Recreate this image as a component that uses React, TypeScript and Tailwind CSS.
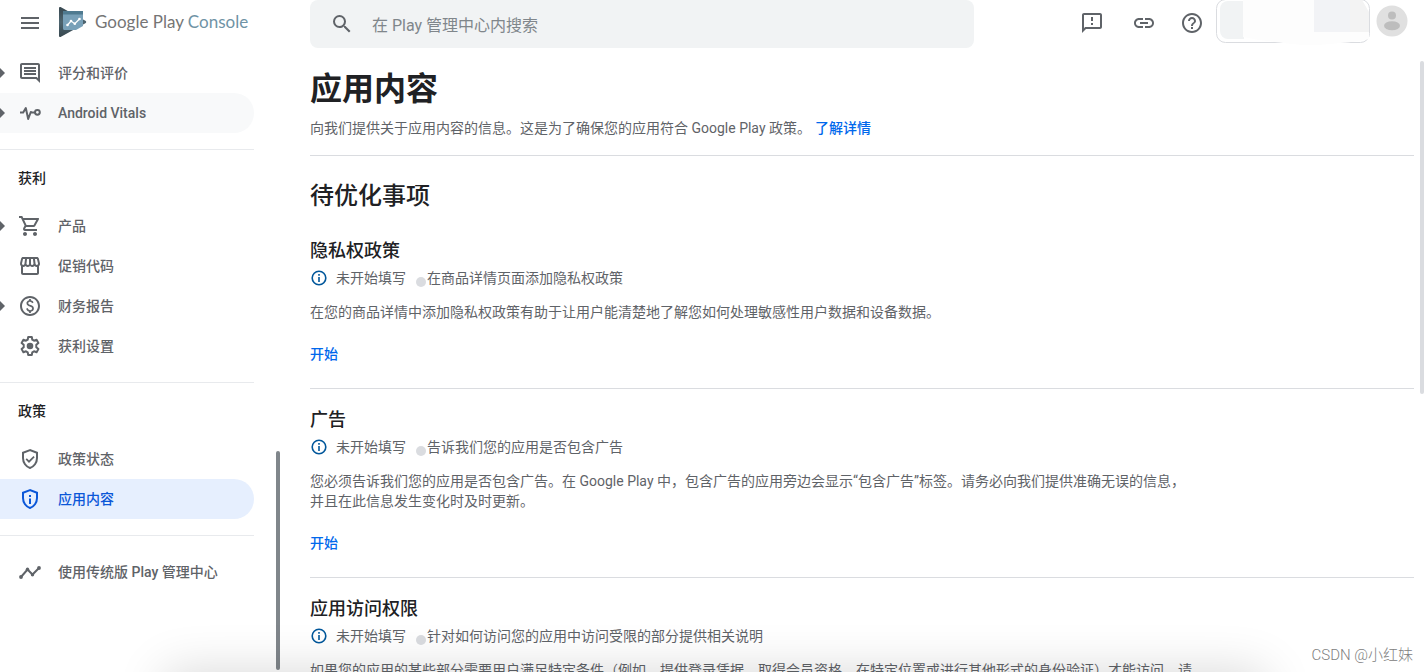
import type { ReactNode } from 'react'
import {
  MdHelpOutline,
  MdLink,
  MdMenu,
  MdOutlineComment,
  MdOutlineFeedback,
  MdOutlinePaid,
  MdOutlineShoppingCart,
  MdOutlineStorefront,
  MdSearch,
} from 'react-icons/md'

type NavItem = {
  label: string
  icon: ReactNode
  expandable?: boolean
  state?: 'hover' | 'active'
}

type Task = {
  title: string
  hint: string
  description: string
}

const SHIELD = 'M12 3.1 5 5.7v5.4c0 4.5 3 8.7 7 9.9 4-1.2 7-5.4 7-9.9V5.7z'

function VitalsIcon() {
  return (
    <svg width="24" height="24" viewBox="0 0 24 24" fill="none" stroke="currentColor" strokeWidth="2" strokeLinejoin="round">
      <path d="M2 11.5h3.2L7.8 7l2.4 11 2.6-7 1.2.6h3" />
      <circle cx="19.4" cy="11.3" r="2.4" />
    </svg>
  )
}

function GearIcon() {
  return (
    <svg width="24" height="24" viewBox="0 0 24 24" fill="none" stroke="currentColor" strokeWidth="2" strokeLinejoin="round">
      <path d="M10.2 3h3.6l.5 2.7 1.7 1 2.6-.9 1.8 3.1-2.1 1.8v2.6l2.1 1.8-1.8 3.1-2.6-.9-1.7 1-.5 2.7h-3.6l-.5-2.7-1.7-1-2.6.9-1.8-3.1 2.1-1.8v-2.6L3.6 8.9l1.8-3.1 2.6.9 1.7-1z" />
      <circle cx="12" cy="12" r="3.3" fill="currentColor" stroke="none" />
    </svg>
  )
}

function ShieldCheckIcon() {
  return (
    <svg width="24" height="24" viewBox="0 0 24 24" fill="none" stroke="currentColor" strokeWidth="2">
      <path d={SHIELD} />
      <path d="m8.2 11.9 2.8 2.8 5.1-5.1" strokeWidth="1.7" />
    </svg>
  )
}

function ShieldInfoIcon() {
  return (
    <svg width="24" height="24" viewBox="0 0 24 24" fill="none" stroke="currentColor" strokeWidth="2">
      <path d={SHIELD} />
      <path d="M12 8v2M12 11.5V17" />
    </svg>
  )
}

function TrendIcon() {
  return (
    <svg width="24" height="24" viewBox="0 0 24 24" fill="currentColor">
      <path d="m3 17 6.5-7.5 5 5L21 8" fill="none" stroke="currentColor" strokeWidth="2" />
      <circle cx="3" cy="17" r="1.9" />
      <circle cx="9.5" cy="9.3" r="1.7" />
      <circle cx="14.5" cy="14.8" r="1.7" />
      <circle cx="21" cy="8" r="1.9" />
    </svg>
  )
}

function InfoIcon() {
  return (
    <svg className="shrink-0" width="18" height="18" viewBox="0 0 18 18" fill="none" stroke="#01579b" strokeWidth="1.6">
      <circle cx="9" cy="9" r="6.8" />
      <path d="M9 5v1.7M9 8v5" />
    </svg>
  )
}

function PlayLogo() {
  return (
    <svg width="28" height="32" viewBox="0 0 28 32">
      <defs>
        <linearGradient id="logo-back" x1="0" y1="0" x2="0" y2="1">
          <stop offset="0" stopColor="#37474f" />
          <stop offset="0.5" stopColor="#4d646f" />
          <stop offset="1" stopColor="#37474f" />
        </linearGradient>
      </defs>
      <path d="M0 2.2C0 1 1 .6 2 1.2l24.4 13.6c1.1.7 1.1 1.9 0 2.5L2 30.8c-1 .5-2 .1-2-1z" fill="url(#logo-back)" />
      <path d="M4 5h20v15l-7 4H5.5C4.6 24 4 23.4 4 22.5z" fill="#78a0b8" />
      <path d="M4 5h20v3.5H4z" fill="#4f7a90" />
      <path d="m8.5 19 3.5-4 3.8 2.7L20.5 13" fill="none" stroke="#fff" strokeWidth="1.3" />
      <g fill="#fff">
        <circle cx="8.5" cy="19" r="1.3" />
        <circle cx="12" cy="15" r="1.3" />
        <circle cx="15.8" cy="17.7" r="1.3" />
        <circle cx="20.5" cy="13" r="1.3" />
      </g>
    </svg>
  )
}

function AccountChip() {
  return (
    <svg className="block" width="154" height="46" viewBox="0 0 154 46">
      <rect x=".5" y="-.5" width="153" height="43" rx="9" fill="#fff" stroke="#dadce0" />
      <path d="M28 1v38H12a8 8 0 0 1-8-8V9a8 8 0 0 1 8-8z" fill="#f1f3f4" />
      <path d="M27 0h71v32h55v7c-12 3-30 4-50 6-24 1-40-3-60-5l-16-3z" fill="#fdfdfd" />
      <path d="M98 0h36v32H98z" fill="#f2f3f6" />
      <path d="M134 0h12l7 12v20h-19z" fill="#f3f3f3" />
    </svg>
  )
}

function Avatar() {
  return (
    <svg width="32" height="32" viewBox="0 0 32 32">
      <circle cx="16" cy="16" r="15.5" fill="#e0e0e0" />
      <circle cx="16" cy="10.5" r="4" fill="#bdbdbd" />
      <ellipse cx="16" cy="20.7" rx="8" ry="4.5" fill="#bdbdbd" />
    </svg>
  )
}

const topItems: NavItem[] = [
  { label: '评分和评价', icon: <MdOutlineComment size={24} />, expandable: true },
  { label: 'Android Vitals', icon: <VitalsIcon />, expandable: true, state: 'hover' },
]

const monetizeItems: NavItem[] = [
  { label: '产品', icon: <MdOutlineShoppingCart size={24} />, expandable: true },
  { label: '促销代码', icon: <MdOutlineStorefront size={24} /> },
  { label: '财务报告', icon: <MdOutlinePaid size={24} />, expandable: true },
  { label: '获利设置', icon: <GearIcon /> },
]

const policyItems: NavItem[] = [
  { label: '政策状态', icon: <ShieldCheckIcon /> },
  { label: '应用内容', icon: <ShieldInfoIcon />, state: 'active' },
]

const legacyItems: NavItem[] = [{ label: '使用传统版 Play 管理中心', icon: <TrendIcon /> }]

const tasks: Task[] = [
  {
    title: '隐私权政策',
    hint: '在商品详情页面添加隐私权政策',
    description: '在您的商品详情中添加隐私权政策有助于让用户能清楚地了解您如何处理敏感性用户数据和设备数据。',
  },
  {
    title: '广告',
    hint: '告诉我们您的应用是否包含广告',
    description:
      '您必须告诉我们您的应用是否包含广告。在 Google Play 中，包含广告的应用旁边会显示“包含广告”标签。请务必向我们提供准确无误的信息，并且在此信息发生变化时及时更新。',
  },
  {
    title: '应用访问权限',
    hint: '针对如何访问您的应用中访问受限的部分提供相关说明',
    description:
      '如果您的应用的某些部分需要用户满足特定条件（例如，提供登录凭据、取得会员资格、在特定位置或进行其他形式的身份验证）才能访问，请',
  },
]

const itemColors = {
  default: 'text-[#5f6368]',
  hover: 'bg-[#f8f9fa] text-[#5f6368]',
  active: 'bg-[#e6effe] text-[#0b57d8]',
}

function NavList({ items }: { items: NavItem[] }) {
  return (
    <ul>
      {items.map((item) => (
        <li key={item.label}>
          <a
            href="#"
            className={`flex h-10 items-center rounded-r-full text-sm font-medium ${itemColors[item.state ?? 'default']}`}
          >
            <span className="w-[18px]">
              {item.expandable && (
                <svg width="5" height="10" viewBox="0 0 5 10" fill="#5f6368">
                  <path d="M0 0l5 5-5 5z" />
                </svg>
              )}
            </span>
            <span className="w-10">{item.icon}</span>
            {item.label}
          </a>
        </li>
      ))}
    </ul>
  )
}

function NavHeading({ children }: { children: ReactNode }) {
  return (
    <h2 className="mt-4 flex h-[57px] items-center border-t border-[#e8eaed] pl-[18px] text-sm font-medium text-[#202124]">
      {children}
    </h2>
  )
}

function Sidebar() {
  return (
    <aside className="flex w-[280px] shrink-0 flex-col">
      <div className="flex h-[53px] shrink-0 items-start pl-[18px] text-[#5f6368]">
        <button type="button" aria-label="菜单" className="mt-[11px]">
          <MdMenu size={24} />
        </button>
        <a href="#" className="ml-[17px] mt-[6px] flex items-center gap-2">
          <PlayLogo />
          <span className="whitespace-nowrap font-['Lato'] text-[17px] text-[#757575]">
            Google Play <span className="text-[#6f93a5]">Console</span>
          </span>
        </a>
      </div>
      <nav className="mr-[26px]">
        <NavList items={topItems} />
        <NavHeading>获利</NavHeading>
        <NavList items={monetizeItems} />
        <NavHeading>政策</NavHeading>
        <NavList items={policyItems} />
        <div className="mt-4 border-t border-[#e8eaed] pt-4">
          <NavList items={legacyItems} />
        </div>
      </nav>
    </aside>
  )
}

function Header() {
  return (
    <header className="flex h-12 shrink-0 items-start justify-between pr-5 text-[#5f6368]">
      <label className="flex h-12 w-[664px] items-center rounded-lg bg-[#f1f3f4] pl-5">
        <MdSearch size={24} className="shrink-0" />
        <input
          type="search"
          aria-label="在 Play 管理中心内搜索"
          placeholder="在 Play 管理中心内搜索"
          className="ml-[18px] w-full bg-transparent pt-[3px] text-base outline-none placeholder:text-[#80868b]"
        />
      </label>
      <div className="flex items-start">
        <div className="mr-3 mt-[11px] flex items-center">
          <button type="button" aria-label="发送反馈" className="mr-7">
            <MdOutlineFeedback size={24} />
          </button>
          <button type="button" aria-label="复制链接" className="mr-6">
            <MdLink size={24} />
          </button>
          <button type="button" aria-label="帮助">
            <MdHelpOutline size={24} />
          </button>
        </div>
        <button type="button" aria-label="当前应用">
          <AccountChip />
        </button>
        <button type="button" aria-label="账号" className="ml-[6px] mt-[5px]">
          <Avatar />
        </button>
      </div>
    </header>
  )
}

function TaskSection({ task }: { task: Task }) {
  return (
    <section className="border-b border-[#dadce0] pb-6 pt-[17px]">
      <h3 className="text-lg font-medium leading-7 text-[#202124]">{task.title}</h3>
      <div className="flex h-[26px] items-center">
        <InfoIcon />
        <span className="ml-2">未开始填写</span>
        <span className="ml-[10px] mt-2 size-[10px] rounded-full bg-[#dadce0]" />
        <span className="ml-px">{task.hint}</span>
      </div>
      <p className="mt-[11px] max-w-[886px]">{task.description}</p>
      <a href="#" className="mt-[22px] inline-block align-top font-medium text-[#0068ec]">
        开始
      </a>
    </section>
  )
}

export default function App() {
  return (
    <div className="relative flex h-screen overflow-hidden bg-white font-['Roboto','Noto_Sans_CJK_SC',sans-serif]">
      <Sidebar />
      <div className="flex min-w-0 flex-1 flex-col pl-[30px]">
        <Header />
        <main className="mr-[14px] text-sm leading-5 text-[#5f6368]">
          <div className="border-b border-[#dadce0] pb-[17px] pt-[21px]">
            <h1 className="text-[32px] font-bold leading-10 text-[#202124]">应用内容</h1>
            <p className="mt-[9px]">
              向我们提供关于应用内容的信息。这是为了确保您的应用符合 Google Play 政策。
              <a href="#" className="ml-1 font-medium text-[#0068ec]">
                了解详情
              </a>
            </p>
          </div>
          <h2 className="mb-1 mt-5 text-2xl font-medium leading-10 text-[#202124]">待优化事项</h2>
          {tasks.map((task) => (
            <TaskSection key={task.title} task={task} />
          ))}
        </main>
      </div>

      {/* Scroll thumbs */}
      <div className="absolute bottom-[2px] left-[276px] h-[219px] w-1 rounded-full bg-[#80868b]" />
      <div className="absolute right-1 top-[61px] h-[333px] w-1 rounded-full bg-[#dadce0]" />

      {/* Shadow cast from below the fold */}
      <div className="pointer-events-none absolute left-[165px] right-[163px] top-full h-20 shadow-[0_0_50px_rgba(0,0,0,0.16)]" />

      <span className="absolute bottom-[6px] right-[15px] text-[15px] font-light leading-[22px] text-[#808080]">
        CSDN @小红妹
      </span>
    </div>
  )
}
